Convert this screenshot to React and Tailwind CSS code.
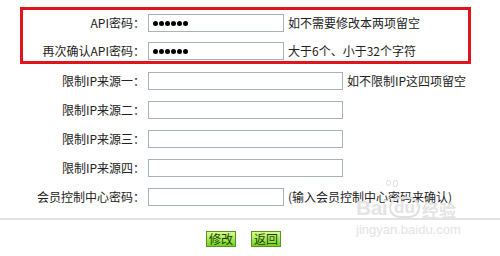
import React from "react"

const font = { fontFamily: '"Noto Sans CJK SC", "Liberation Sans", sans-serif' }
const latin = { fontFamily: '"Liberation Sans", sans-serif' }

const Field = ({ wide, dots }) => (
  <div
    className={`h-[18px] border border-[#a7b2bc] bg-white flex items-center pl-[4px] ${
      wide ? "w-[195px]" : "w-[136px]"
    }`}
  >
    {dots && (
      <div className="flex gap-[1px]">
        {[0, 1, 2, 3, 4, 5].map((i) => (
          <span key={i} className="block w-[5px] h-[5px] rounded-full bg-black" />
        ))}
      </div>
    )}
  </div>
)

const Row = ({ label, labelWidth, wide, dots, hint }) => (
  <div className="flex items-center h-[18px]">
    <div className="text-right pr-[3px] whitespace-nowrap" style={{ width: labelWidth }}>
      {label}
    </div>
    <Field wide={wide} dots={dots} />
    {hint && <div className="pl-[4px] whitespace-nowrap">{hint}</div>}
  </div>
)

const GreenButton = ({ children }) => (
  <button className="h-[16px] px-[2px] leading-[14px] border border-[#5f8f2a] bg-gradient-to-b from-[#d6ff8a] to-[#6fd400] text-[#1f3d00]">
    {children}
  </button>
)

export default function App() {
  return (
    <div className="relative w-[500px] h-[256px] bg-white text-[12px] text-[#222] overflow-hidden" style={font}>
      {/* boxed rows */}
      <div className="mt-[7px] ml-[20px] w-[451px] border-[3px] border-[#e0141c] pt-[4px] pb-[1px] flex flex-col gap-[10px]">
        <Row label="API密码：" labelWidth={125} dots hint="如不需要修改本两项留空" />
        <Row label="再次确认API密码：" labelWidth={125} dots hint="大于6个、小于32个字符" />
      </div>

      <div className="mt-[8px] flex flex-col gap-[11px]">
        <Row label="限制IP来源一：" labelWidth={148} wide hint="如不限制IP这四项留空" />
        <Row label="限制IP来源二：" labelWidth={148} wide />
        <Row label="限制IP来源三：" labelWidth={148} wide />
        <Row label="限制IP来源四：" labelWidth={148} wide />
        <Row label="会员控制中心密码：" labelWidth={148} hint="(输入会员控制中心密码来确认)" />
      </div>

      <div className="mt-[12px] h-[2px] bg-[#e2e2e2]" />

      <div className="mt-[11px] flex justify-center gap-[15px] pr-[13px]">
        <GreenButton>修改</GreenButton>
        <GreenButton>返回</GreenButton>
      </div>

      {/* watermark */}
      <div className="absolute left-[356px] top-[180px] pointer-events-none select-none text-[#e4e4e4]">
        <div className="flex ml-[30px] gap-[2px]">
          <span className="block w-[5px] h-[6px] rounded-full border border-[#dcdcdc]" />
          <span className="block w-[5px] h-[7px] rounded-full border border-[#dcdcdc]" />
        </div>
        <div className="flex items-end gap-[2px] mt-[10px]" style={latin}>
          <span className="text-[21px] font-bold leading-none tracking-tight">Bai</span>
          <span className="text-[17px] font-bold leading-none border-[2px] border-[#e0e0e0] rounded-full px-[3px]">du</span>
          <span className="text-[17px] font-bold leading-none" style={font}>经验</span>
        </div>
        <div className="mt-[5px] text-[13px] leading-none" style={latin}>
          jingyan.baidu.com
        </div>
      </div>
    </div>
  )
}
